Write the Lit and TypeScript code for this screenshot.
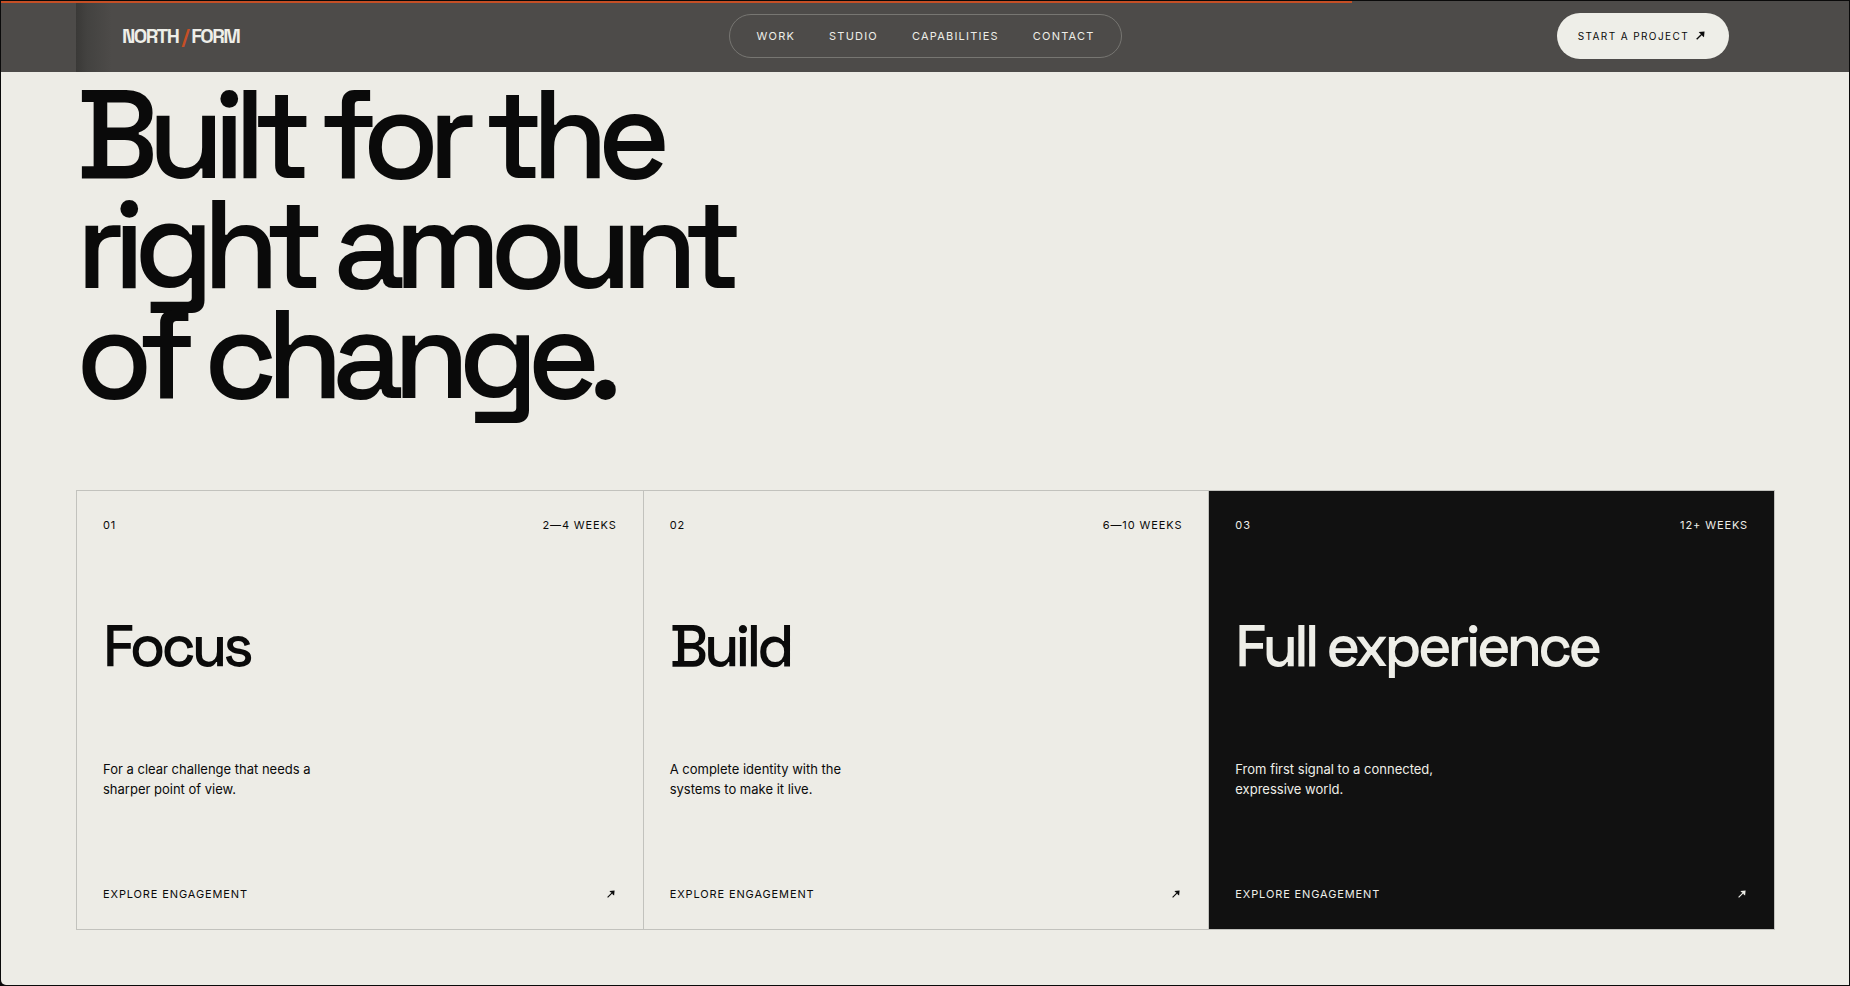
import { LitElement, html, css } from "lit";
import { customElement, property } from "lit/decorators.js";

interface Engagement {
  no: string;
  time: string;
  name: string;
  text: string;
  dark?: boolean;
}

const engagements: Engagement[] = [
  { no: "01", time: "2—4 weeks", name: "Focus", text: "For a clear challenge that needs a sharper point of view." },
  { no: "02", time: "6—10 weeks", name: "Build", text: "A complete identity with the systems to make it live." },
  { no: "03", time: "12+ weeks", name: "Full experience", text: "From first signal to a connected, expressive world.", dark: true },
];

const arrow = html`<svg class="arrow" viewBox="0 0 8 8" aria-hidden="true">
  <path d="M0.6 7.4 L5.6 2.4" fill="none" stroke="currentColor" stroke-width="1.2" />
  <path d="M2.4 0.9 L7.6 0.4 L7.1 5.6 L5.7 4.4 L5 3 L3.6 2.3 Z" fill="currentColor" />
</svg>`;

@customElement("engagement-card")
export class EngagementCard extends LitElement {
  @property({ attribute: false }) data!: Engagement;

  static styles = css`
    :host { display: block; }
    .card {
      box-sizing: border-box;
      height: 100%;
      min-height: 438px;
      padding: 26px 26px 27px;
      display: flex;
      flex-direction: column;
      justify-content: space-between;
      color: #0a0a0a;
    }
    .dark { background: #111111; color: #eeeee8; }
    .row {
      display: flex;
      justify-content: space-between;
      align-items: center;
      font-size: 11px;
      line-height: 16px;
      letter-spacing: 0.08em;
      text-transform: uppercase;
      color: inherit;
      text-decoration: none;
    }
    h3 {
      margin: 0;
      font-family: "Space Grotesk", Inter, sans-serif;
      font-size: 58px;
      line-height: 52px;
      font-weight: 500;
      letter-spacing: -0.07em;
    }
    p { margin: 0; max-width: 215px; font-size: 13px; line-height: 20px; }
    .arrow { width: 8px; height: 8px; margin-right: 2px; }
  `;

  render() {
    const d = this.data;
    return html`<article class="card ${d.dark ? "dark" : ""}">
      <div class="row"><span>${d.no}</span><span>${d.time}</span></div>
      <h3>${d.name}</h3>
      <p>${d.text}</p>
      <a class="row" href="#${d.no}"><span>Explore engagement</span>${arrow}</a>
    </article>`;
  }
}

@customElement("app-root")
export class AppRoot extends LitElement {
  static styles = css`
    :host {
      display: block;
      box-sizing: border-box;
      min-height: 100vh;
      background: #0a0a0a;
      padding: 1px;
      font-family: Inter, sans-serif;
    }
    .page {
      position: relative;
      min-height: calc(100vh - 2px);
      background: #edece6;
      border-bottom-left-radius: 5px;
    }
    .progress {
      position: absolute;
      top: 0;
      left: 0;
      width: 73.1%;
      height: 2px;
      background: #c64f25;
    }
    header {
      box-sizing: border-box;
      display: grid;
      grid-template-columns: 1fr auto 1fr;
      align-items: center;
      min-height: 71px;
      padding: 0 120px 2px 121px;
      background:
        linear-gradient(90deg, #3a3937, #434240 30%, #4d4b49) 75px 0 / 36px 100% no-repeat,
        #4d4b49;
      color: #eeeee8;
    }
    .logo {
      justify-self: start;
      color: inherit;
      text-decoration: none;
      font-family: "Space Grotesk", Inter, sans-serif;
      font-weight: 700;
      font-size: 20px;
      line-height: 24px;
      letter-spacing: -0.08em;
    }
    .slash { color: #c64f25; }
    nav {
      display: flex;
      gap: 34px;
      padding: 0 26px;
      border: 1px solid #777672;
      border-radius: 22px;
    }
    nav a, .cta {
      font-size: 11px;
      line-height: 42px;
      letter-spacing: 0.11em;
      text-transform: uppercase;
      color: inherit;
      text-decoration: none;
    }
    .cta {
      justify-self: end;
      display: flex;
      align-items: center;
      gap: 7px;
      height: 46px;
      padding: 0 24px 0 21px;
      border: 0;
      border-radius: 23px;
      background: #eeeee8;
      color: #0a0a0a;
      font-family: inherit;
      font-size: 10px;
      letter-spacing: 0.14em;
    }
    .cta .arrow { width: 9px; height: 9px; }
    main { padding: 8px 74px 54px 75px; }
    h2 {
      margin: 0 0 80px;
      font-family: "Space Grotesk", Inter, sans-serif;
      font-size: 125px;
      line-height: 110px;
      font-weight: 500;
      letter-spacing: -0.09em;
      color: #0a0a0a;
    }
    .cards {
      display: grid;
      grid-template-columns: repeat(3, 1fr);
      border: 1px solid #c2c2bd;
    }
    .cards > * + * { border-left: 1px solid #c2c2bd; }
  `;

  render() {
    return html`<div class="page">
      <header>
        <a class="logo" href="#top">NORTH <span class="slash">/</span> FORM</a>
        <nav aria-label="Main">
          <a href="#work">Work</a>
          <a href="#studio">Studio</a>
          <a href="#capabilities">Capabilities</a>
          <a href="#contact">Contact</a>
        </nav>
        <button class="cta" type="button">Start a project ${arrow}</button>
      </header>
      <div class="progress"></div>
      <main>
        <h2>Built for the<br />right amount<br />of change.</h2>
        <section class="cards">
          ${engagements.map((e) => html`<engagement-card .data=${e}></engagement-card>`)}
        </section>
      </main>
    </div>`;
  }
}
